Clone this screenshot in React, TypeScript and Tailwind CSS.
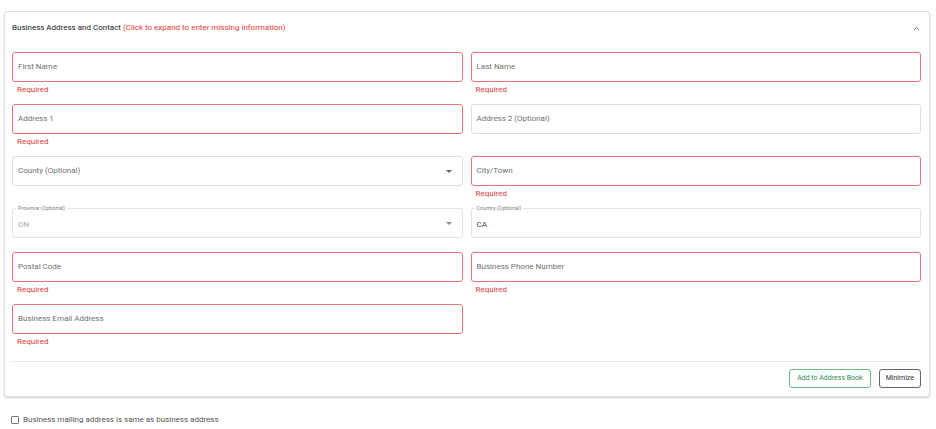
import React from "react";

const font = { fontFamily: "Roboto, 'Liberation Sans', sans-serif" };

function Field({
  label,
  error,
  select,
}: {
  label: string;
  error?: boolean;
  select?: boolean;
}) {
  return (
    <div className="flex flex-col">
      <div
        className={`relative h-[30px] rounded-[3px] border bg-white flex items-center pl-[5px] pr-[10px] ${
          error ? "border-[#e57373]" : "border-[#dedede]"
        }`}
      >
        <span className="text-[8px] leading-[10px] text-[#707070]">{label}</span>
        {select && (
          <span className="ml-auto w-0 h-0 border-l-[3px] border-r-[3px] border-t-[3px] border-l-transparent border-r-transparent border-t-[#666]" />
        )}
      </div>
      {error && (
        <div className="h-[22px] pt-[3px] pl-[5px] text-[8px] leading-[10px] text-[#e53935]">
          Required
        </div>
      )}
    </div>
  );
}

function FloatField({
  label,
  value,
  disabled,
  select,
}: {
  label: string;
  value: string;
  disabled?: boolean;
  select?: boolean;
}) {
  return (
    <div className="relative h-[30px] rounded-[3px] border border-[#e3e3e3] bg-white flex items-center pl-[5px] pr-[10px]">
      <span className="absolute -top-[4px] left-[3px] bg-white px-[2px] text-[5.5px] leading-[7px] text-[#808080]">
        {label}
      </span>
      <span
        className={`mt-[4px] text-[8px] leading-[10px] ${
          disabled ? "text-[#aaa]" : "text-[#444]"
        }`}
      >
        {value}
      </span>
      {select && (
        <span className="ml-auto w-0 h-0 border-l-[3px] border-r-[3px] border-t-[3px] border-l-transparent border-r-transparent border-t-[#888]" />
      )}
    </div>
  );
}

export default function App() {
  return (
    <div className="w-[936px] h-[429px] bg-white overflow-hidden" style={font}>
      <div className="pt-[11px] pl-[4px] pr-[6px]">
        <div className="rounded-[3px] border border-[#e0e0e0] shadow-[0_1px_2px_rgba(0,0,0,0.2)] bg-white pl-[7px] pr-[8px] pt-[10px] pb-[8px]">
          <div className="flex items-center h-[12px] mb-[18px]">
            <span className="text-[8px] leading-[12px] text-[#222]">
              Business Address and Contact{" "}
              <span className="text-[#e53935]">
                (Click to expand to enter missing information)
              </span>
            </span>
            <svg
              className="ml-auto mr-[1px]"
              width="7"
              height="5"
              viewBox="0 0 7 5"
            >
              <path d="M1 4 L3.5 1.5 L6 4" stroke="#777" strokeWidth="1" fill="none" />
            </svg>
          </div>

          <div className="grid grid-cols-2 gap-x-[8px]">
            <Field label="First Name" error />
            <Field label="Last Name" error />
            <Field label="Address 1" error />
            <Field label="Address 2 (Optional)" />
            <Field label="County (Optional)" select />
            <Field label="City/Town" error />
            <div className="mb-[14px]">
              <FloatField label="Province (Optional)" value="ON" disabled select />
            </div>
            <div className="mb-[14px]">
              <FloatField label="Country (Optional)" value="CA" />
            </div>
            <Field label="Postal Code" error />
            <Field label="Business Phone Number" error />
            <Field label="Business Email Address" error />
            <div />
          </div>

          <div className="mt-[5px] border-t border-[#e5e5e5]" />
          <div className="flex justify-end gap-[8px] pt-[7px]">
            <button className="h-[19px] px-[7px] rounded-[3px] border border-[#66bb86] text-[7px] text-[#2e8b4f] bg-white">
              Add to Address Book
            </button>
            <button className="h-[19px] px-[6px] rounded-[3px] border border-[#666] text-[7px] text-[#333] bg-white">
              Minimize
            </button>
          </div>
        </div>

        <div className="flex items-center mt-[18px] pl-[7px]">
          <span className="w-[8px] h-[8px] border border-[#777] rounded-[1px] bg-white" />
          <span className="ml-[4px] text-[8px] leading-[10px] text-[#555]">
            Business mailing address is same as business address
          </span>
        </div>
      </div>
    </div>
  );
}
